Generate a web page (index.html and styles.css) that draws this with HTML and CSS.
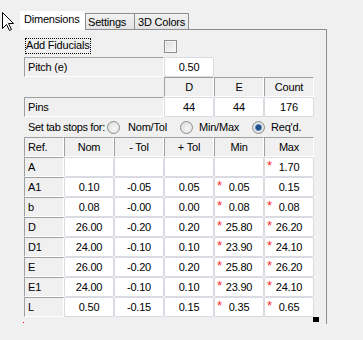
FILE: index.html
```html
<!DOCTYPE html>
<html>
<head>
<meta charset="utf-8">
<link rel="stylesheet" href="styles.css">
</head>
<body>
<div class="window">
  <svg class="cursor" width="12" height="19" viewBox="0 0 12 19">
    <path d="M0.5 0.5 L0.5 16.5 L4.5 12.5 L7.5 18.5 L9.5 17.5 L6.5 11.5 L11.5 11.5 Z" fill="#fff" stroke="#000" stroke-width="1" stroke-linejoin="miter"/>
  </svg>
  <div class="tabs">
    <div class="tab active">Dimensions</div>
    <div class="tab">Settings</div>
    <div class="tab last">3D Colors</div>
  </div>
  <div class="panel">
    <div class="fid-row">
      <span class="fid-label">Add Fiducials</span>
      <span class="checkbox"></span>
    </div>
    <div class="upper">
      <div class="cell label">Pitch (e)</div>
      <div class="cell data">0.50</div>
      <div class="blank"></div>
      <div class="blank"></div>

      <div class="blank"></div>
      <div class="cell head">D</div>
      <div class="cell head">E</div>
      <div class="cell head">Count</div>

      <div class="cell label">Pins</div>
      <div class="cell data">44</div>
      <div class="cell data">44</div>
      <div class="cell data">176</div>
    </div>
    <div class="radio-row">
      <span class="radio-caption">Set tab stops for:</span>
      <span class="opt o1"><span class="radio"></span>Nom/Tol</span>
      <span class="opt o2"><span class="radio"></span>Min/Max</span>
      <span class="opt o3"><span class="radio checked"></span>Req'd.</span>
    </div>
    <div class="table">
      <div class="cell label">Ref.</div>
      <div class="cell head">Nom</div>
      <div class="cell head">- Tol</div>
      <div class="cell head">+ Tol</div>
      <div class="cell head">Min</div>
      <div class="cell head">Max</div>

      <div class="cell label">A</div>
      <div class="cell data"></div>
      <div class="cell data"></div>
      <div class="cell data"></div>
      <div class="cell data"></div>
      <div class="cell data req">1.70</div>

      <div class="cell label">A1</div>
      <div class="cell data">0.10</div>
      <div class="cell data">-0.05</div>
      <div class="cell data">0.05</div>
      <div class="cell data req">0.05</div>
      <div class="cell data">0.15</div>

      <div class="cell label">b</div>
      <div class="cell data">0.08</div>
      <div class="cell data">-0.00</div>
      <div class="cell data">0.00</div>
      <div class="cell data req">0.08</div>
      <div class="cell data req">0.08</div>

      <div class="cell label">D</div>
      <div class="cell data">26.00</div>
      <div class="cell data">-0.20</div>
      <div class="cell data">0.20</div>
      <div class="cell data req">25.80</div>
      <div class="cell data req">26.20</div>

      <div class="cell label">D1</div>
      <div class="cell data">24.00</div>
      <div class="cell data">-0.10</div>
      <div class="cell data">0.10</div>
      <div class="cell data req">23.90</div>
      <div class="cell data req">24.10</div>

      <div class="cell label">E</div>
      <div class="cell data">26.00</div>
      <div class="cell data">-0.20</div>
      <div class="cell data">0.20</div>
      <div class="cell data req">25.80</div>
      <div class="cell data req">26.20</div>

      <div class="cell label">E1</div>
      <div class="cell data">24.00</div>
      <div class="cell data">-0.10</div>
      <div class="cell data">0.10</div>
      <div class="cell data req">23.90</div>
      <div class="cell data req">24.10</div>

      <div class="cell label">L</div>
      <div class="cell data">0.50</div>
      <div class="cell data">-0.15</div>
      <div class="cell data">0.15</div>
      <div class="cell data req">0.35</div>
      <div class="cell data req">0.65</div>
    </div>
    <span class="red-dot"></span>
    <span class="grip"></span>
  </div>
</div>
</body>
</html>
```

FILE: styles.css
```css
html, body {
  margin: 0;
  padding: 0;
  background: #f0f0f0;
}
body {
  font-family: "Liberation Sans", Arial, sans-serif;
  font-size: 11px;
  letter-spacing: -0.2px;
  color: #000;
}
.window {
  position: relative;
  width: 363px;
  height: 340px;
}
.cursor {
  position: absolute;
  left: 2px;
  top: 12px;
}
.tabs {
  display: flex;
  align-items: flex-end;
  height: 29px;
  padding-left: 20px;
  box-sizing: border-box;
}
.tab {
  box-sizing: border-box;
  height: 16px;
  line-height: 16px;
  border-top: 1px solid #8c8e94;
  border-left: 1px solid #8c8e94;
  background: linear-gradient(#f2f2f2, #e3e3e3);
  padding-left: 2px;
  width: 49px;
  white-space: nowrap;
}
.tab.last {
  width: 55px;
  border-right: 1px solid #8c8e94;
  padding-left: 3px;
}
.tab.active {
  width: 65px;
  height: 19px;
  line-height: 16px;
  background: #fff;
  border: none;
  padding-left: 4px;
  margin-bottom: -1px;
  position: relative;
  z-index: 1;
}
.panel {
  position: relative;
  margin-left: 20px;
  width: 307px;
  height: 295px;
  box-sizing: border-box;
  border-top: 1px solid #8c8e94;
  border-right: 1px solid #8c8e94;
  padding: 8px 0 0 4px;
}
.fid-row {
  display: grid;
  grid-template-columns: 140px 13px;
  height: 16px;
  margin-bottom: 3px;
  align-items: start;
}
.fid-label {
  justify-self: start;
  margin-left: 1px;
  outline: 1px dotted #000;
  outline-offset: -1px;
  padding: 0 2px 0 1px;
  height: 16px;
  line-height: 15px;
}
.checkbox {
  width: 13px;
  height: 13px;
  box-sizing: border-box;
  margin-top: 2px;
  border: 1px solid #8e8f8f;
  background: linear-gradient(135deg, #dcdcdc, #fbfbfb);
  box-shadow: inset 0 0 0 1px #f4f4f4;
}
.upper {
  display: grid;
  grid-template-columns: 140px 50px 50px 50px;
  grid-auto-rows: 20px;
}
.table {
  display: grid;
  grid-template-columns: 40px 50px 50px 50px 50px 50px;
  grid-auto-rows: 20px;
}
.cell {
  position: relative;
  box-sizing: border-box;
  height: 20px;
  line-height: 18px;
  white-space: nowrap;
}
.label {
  background: #f0f0f0;
  border-top: 1px solid #a0a0a0;
  border-left: 1px solid #a0a0a0;
  border-right: 1px solid #fff;
  border-bottom: 1px solid #fff;
  padding-left: 3px;
}
.head {
  background: #f0f0f0;
  border-top: 1px solid #a0a0a0;
  border-left: 1px solid #a0a0a0;
  border-right: 1px solid #fff;
  border-bottom: 1px solid #fff;
  text-align: center;
}
.data {
  background: #fff;
  border: 1px solid #dadae2;
  border-radius: 2px;
  text-align: center;
}
.req::before {
  content: "*";
  position: absolute;
  left: 2px;
  top: 1px;
  color: #ff2a2a;
  font-size: 13px;
  line-height: 13px;
}
.radio-row {
  display: flex;
  align-items: center;
  height: 20px;
  white-space: nowrap;
}
.radio-caption {
  width: 83px;
  padding-left: 4px;
  box-sizing: border-box;
  letter-spacing: -0.35px;
}
.opt {
  display: flex;
  align-items: center;
}
.o1 { width: 73px; }
.o2 { width: 72px; }
.radio {
  width: 13px;
  height: 13px;
  box-sizing: border-box;
  border-radius: 50%;
  border: 1px solid #8e8f8f;
  background: radial-gradient(circle at 60% 60%, #f8f8f8, #d6d6d6);
  margin-right: 8px;
  flex: none;
}
.o2 .radio, .o3 .radio { margin-right: 6px; }
.radio.checked {
  background: radial-gradient(circle, #2b5a9a 0, #1a4479 2px, #5a8cc4 3px, #e8e8e8 4px, #d6d6d6 6px);
}
.red-dot {
  position: absolute;
  left: 3px;
  top: 292px;
  width: 1px;
  height: 1px;
  background: #ff0000;
}
.grip {
  position: absolute;
  left: 293px;
  top: 287px;
  width: 6px;
  height: 5px;
  background: #000;
}
```
